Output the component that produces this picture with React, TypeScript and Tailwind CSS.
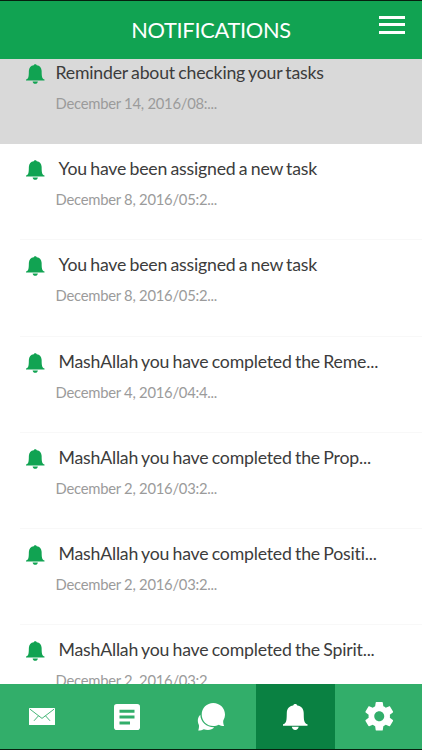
import { ReactNode, useState } from 'react';

type Notification = {
    title: string;
    date: string;
    read?: boolean;
}

const notifications: Notification[] = [
    { title: "Reminder about checking your tasks", date: "December 14, 2016/08:...", read: true },
    { title: "You have been assigned a new task", date: "December 8, 2016/05:2..." },
    { title: "You have been assigned a new task", date: "December 8, 2016/05:2..." },
    { title: "MashAllah you have completed the Reme...", date: "December 4, 2016/04:4..." },
    { title: "MashAllah you have completed the Prop...", date: "December 2, 2016/03:2..." },
    { title: "MashAllah you have completed the Positi...", date: "December 2, 2016/03:2..." },
    { title: "MashAllah you have completed the Spirit...", date: "December 2, 2016/03:2..." },
];

function Bell({ className }: { className: string }){
    return (
        <svg viewBox="0 0 24.5 26" fill="currentColor" className={className}>
            <path d="M12.250 0c1.100 0 1.800.6 2 1.400C18.300 2 20.500 4.600 20.700 8.700c.1 3 0 5.900.6 8.300.5 1.900 1.700 2.900 3.200 3.300v1.400H0v-1.400c1.500-.4 2.700-1.400 3.200-3.300.6-2.400.5-5.300.6-8.300.2-4.100 2.400-6.700 6.450-7.300.2-.8.9-1.400 2-1.400z" />
            <path d="M8.800 22.800h6.900c-.3 1.900-1.600 3.100-3.450 3.100s-3.150-1.200-3.450-3.100z" />
        </svg>
    )
}

function Mail(){
    return (
        <svg viewBox="0 0 26 17" className="w-[26px] h-[17px]">
            <rect width="26" height="17" rx=".6" fill="#fff" />
            <path d="M1 1.200 13 10.400 25 1.200M5 12.800l4.500-5M21 12.800l-4.500-5" fill="none" stroke="#32ae6a" strokeWidth=".9" />
        </svg>
    )
}

function Note(){
    return (
        <svg viewBox="0 0 26 26" className="size-[26px]">
            <rect width="26" height="26" rx="2.800" fill="#fff" />
            <path d="M5.500 7.300h15M5.500 13.100h15M5.500 19h10.500" stroke="#32ae6a" strokeWidth="3" />
        </svg>
    )
}

function Chat(){
    return (
        <svg viewBox="0 0 28 28" fill="#fff" className="size-7">
            <path d="M3.300 11.800C.8 14 0 18 1.900 21.900c.3.900.1 3.400-.7 5.700 2.300-.1 4.300-.6 5.600-1.300 3.800 1.400 8.300.9 10.400-2C9.900 24.500 3.600 19.400 3.300 11.800z" />
            <path d="M16.300 0c6.500 0 11.700 5.100 11.700 11.500 0 2.200-.7 4.200-1.700 5.900-.3 1.500 0 3.300.8 5.700-2.200-.1-4.100-.6-5.300-1.300-1.600.9-3.500 1.300-5.500 1.300C9.800 23.100 4.700 17.900 4.700 11.500S9.800 0 16.300 0z" />
        </svg>
    )
}

function Gear(){
    return (
        <svg viewBox="2 2 20 20" fill="#fff" className="ml-0.5 size-[28.500px]">
            <path d="M19.430 12.980c.04-.32.07-.64.07-.98s-.03-.66-.07-.98l2.110-1.650c.19-.15.24-.42.12-.64l-2-3.460c-.12-.22-.39-.3-.61-.22l-2.490 1c-.52-.4-1.080-.73-1.690-.98l-.38-2.650C14.460 2.180 14.250 2 14 2h-4c-.25 0-.46.18-.49.42l-.38 2.650c-.61.25-1.170.59-1.690.98l-2.490-1c-.23-.09-.49 0-.61.22l-2 3.460c-.13.22-.07.49.12.64l2.110 1.650c-.04.32-.07.65-.07.98s.03.66.07.98l-2.110 1.650c-.19.15-.24.42-.12.64l2 3.460c.12.22.39.3.61.22l2.490-1c.52.4 1.080.73 1.690.98l.38 2.650c.03.24.24.42.49.42h4c.25 0 .46-.18.49-.42l.38-2.650c.61-.25 1.170-.59 1.690-.98l2.490 1c.23.09.49 0 .61-.22l2-3.460c.12-.22.07-.49-.12-.64l-2.110-1.650zM12 15.500c-1.930 0-3.500-1.570-3.500-3.500s1.570-3.500 3.500-3.500 3.500 1.570 3.500 3.500-1.570 3.500-3.500 3.500z" />
        </svg>
    )
}

function Row({ item }: { item: Notification }){
    return (
        <li className={`h-[96.2px] shrink-0 ${item.read ? "bg-[#d9d9d9]" : "bg-white"}`}>
            <div className={`ml-5 pl-1.5 pt-4 h-full flex ${item.read ? "" : "border-b border-[#f8f8f8]"}`}>
                <Bell className="w-[18.500px] h-5 shrink-0 text-[#11a352]" />
                <div className="ml-[11px] -mt-[3px] min-w-0 whitespace-nowrap">
                    <p className={`text-[17.7px] leading-6 tracking-[-0.2px] [word-spacing:-1px] text-[#3c3c3c] ${item.read ? "" : "pl-[3px]"}`}>{item.title}</p>
                    <p className="mt-2 text-[14.8px] leading-5 tracking-[-0.25px] text-[#9b9b9b]">{item.date}</p>
                </div>
            </div>
        </li>
    )
}

function Tab({ active, handleClick, width, children }: { active: boolean, handleClick: () => void, width: string, children: ReactNode }){
    return (
        <button onClick={handleClick} className={`${width} h-full flex items-center justify-center text-white ${active ? "bg-[#0a8142]" : ""}`}>
            {children}
        </button>
    )
}

function App(){
    const [tab, setTab] = useState<number>(3);

    return (
        <div className="w-[422px] h-[750px] flex flex-col overflow-hidden bg-white border-y border-[#06200f] font-['Lato',sans-serif]">
            <header className="h-[58px] shrink-0 flex bg-[#11a352] text-white">
                <div className="w-14"></div>
                <h1 className="flex-1 text-center text-[21.8px] tracking-[-0.3px] leading-[58px]">NOTIFICATIONS</h1>
                <button className="w-14 pt-[15px] pl-[13px] flex flex-col gap-1" aria-label="Menu">
                    <span className="w-[26px] h-[3px] bg-white"></span>
                    <span className="w-[26px] h-[3px] bg-white"></span>
                    <span className="w-[26px] h-[3px] mt-px bg-white"></span>
                </button>
            </header>
            <main className="flex-1 min-h-0 overflow-hidden">
                <ul className="-mt-[11px] flex flex-col">
                    {notifications.map((item, i) => <Row key={i} item={item} />)}
                </ul>
            </main>
            <nav className="h-[65px] shrink-0 flex bg-[#32ae6a]">
                <Tab width="w-[84px]" active={tab === 0} handleClick={() => setTab(0)}><Mail /></Tab>
                <Tab width="w-[85px]" active={tab === 1} handleClick={() => setTab(1)}><Note /></Tab>
                <Tab width="w-[84px]" active={tab === 2} handleClick={() => setTab(2)}><Chat /></Tab>
                <div className="w-[3px]"></div>
                <Tab width="w-[79px]" active={tab === 3} handleClick={() => setTab(3)}><Bell className="w-[24.500px] h-[26px]" /></Tab>
                <Tab width="w-[87px]" active={tab === 4} handleClick={() => setTab(4)}><Gear /></Tab>
            </nav>
        </div>
    )
}

export default App;
